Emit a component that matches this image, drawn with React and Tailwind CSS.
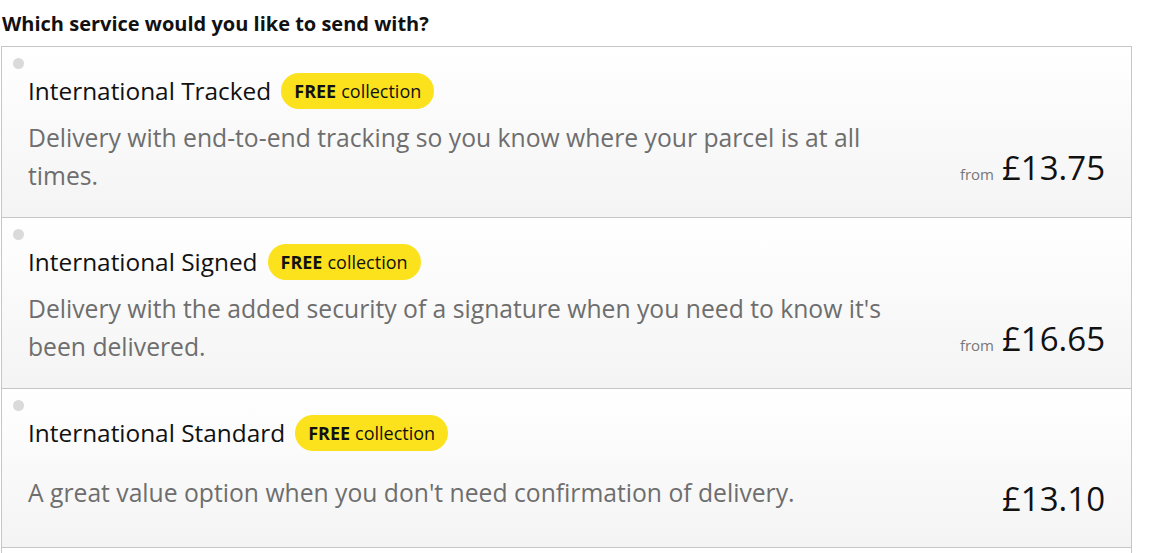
import React from "react";

const rows = [
  {
    title: "International Tracked",
    desc: "Delivery with end-to-end tracking so you know where your parcel is at all times.",
    from: true,
    price: "£13.75",
    descClass: "mt-[10px]",
    priceClass: "mb-[10px]",
    rowClass: "h-[171px]",
  },
  {
    title: "International Signed",
    desc: "Delivery with the added security of a signature when you need to know it's been delivered.",
    from: true,
    price: "£16.65",
    descClass: "mt-[10px]",
    priceClass: "mb-[10px]",
    rowClass: "h-[171px]",
  },
  {
    title: "International Standard",
    desc: "A great value option when you don't need confirmation of delivery.",
    from: false,
    price: "£13.10",
    descClass: "mt-[23px]",
    priceClass: "mb-[-3px]",
    rowClass: "h-[159px]",
  },
];

function Row({ r }) {
  return (
    <div
      className={`${r.rowClass} border-b border-[#c6c6c6] bg-linear-to-b from-white to-[#f4f4f4] flex flex-col`}
    >
      <div className="pt-[11px] pl-[11px]">
        <div className="w-[11px] h-[11px] rounded-full bg-[#dadada]" />
      </div>
      <div className="mt-[4px] pl-[26px] flex items-center h-[36px]">
        <span className="text-[24.4px] leading-none text-[#111]">{r.title}</span>
        <span className="ml-[10px] h-[36px] px-[13px] rounded-full bg-[#fbe21d] flex items-center text-[18px] text-[#111]">
          <span className="font-bold">FREE</span>
          <span className="ml-[5px]">collection</span>
        </span>
      </div>
      <div className={`${r.descClass} pl-[26px] pr-[26px] flex items-end justify-between`}>
        <p className="w-[880px] text-[24.7px] leading-[38px] text-[#6e6e6e]">{r.desc}</p>
        <div className={`${r.priceClass} flex items-baseline`}>
          {r.from && <span className="text-[15px] text-[#777] mr-[8px]">from</span>}
          <span className="text-[33px] leading-none text-[#111]">{r.price}</span>
        </div>
      </div>
    </div>
  );
}

export default function App() {
  return (
    <div
      className="w-[1159px] h-[553px] overflow-hidden bg-white"
      style={{ fontFamily: '"Open Sans", "Noto Sans", sans-serif' }}
    >
      <h2 className="pt-[10px] pl-[2px] text-[20px] leading-[27px] font-bold text-[#111]">
        Which service would you like to send with?
      </h2>
      <div className="mt-[9px] ml-px w-[1131px] border-x border-t border-[#c6c6c6]">
        {rows.map((r) => (
          <Row key={r.title} r={r} />
        ))}
        <div className="h-[20px] bg-white" />
      </div>
    </div>
  );
}
